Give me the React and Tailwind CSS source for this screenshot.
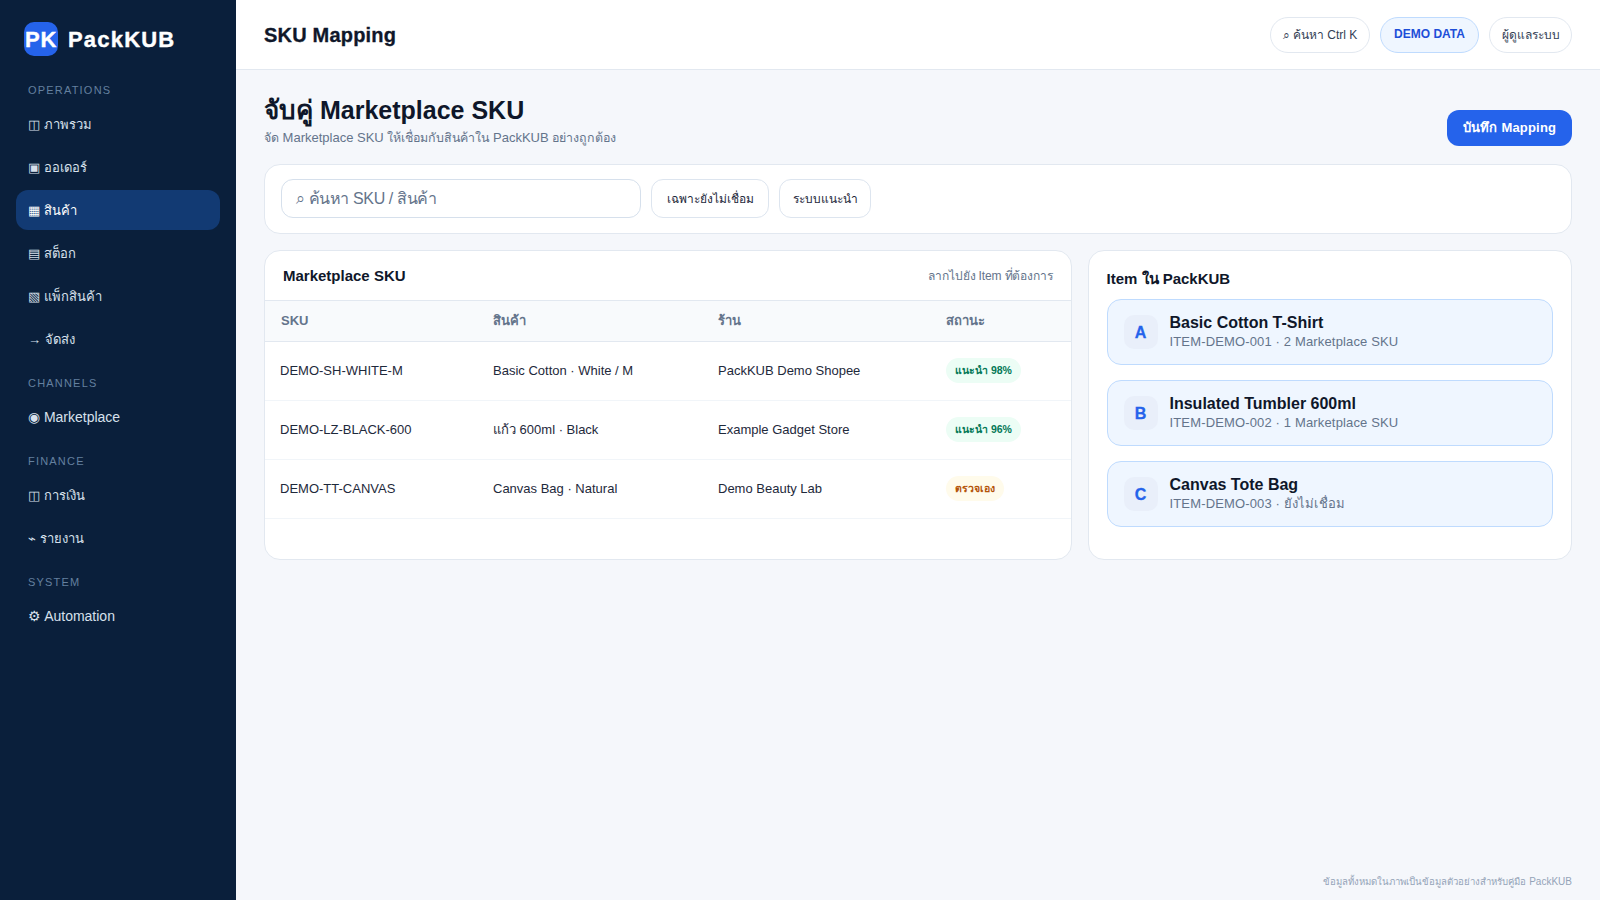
const navGroups = [
  {
    label: 'OPERATIONS',
    items: [
      { icon: '◫', name: 'ภาพรวม' },
      { icon: '▣', name: 'ออเดอร์' },
      { icon: '▦', name: 'สินค้า', active: true },
      { icon: '▤', name: 'สต็อก' },
      { icon: '▧', name: 'แพ็กสินค้า' },
      { icon: '→', name: 'จัดส่ง' },
    ],
  },
  { label: 'CHANNELS', items: [{ icon: '◉', name: 'Marketplace', latin: true }] },
  {
    label: 'FINANCE',
    items: [
      { icon: '◫', name: 'การเงิน' },
      { icon: '⌁', name: 'รายงาน' },
    ],
  },
  { label: 'SYSTEM', items: [{ icon: '⚙', name: 'Automation', latin: true }] },
];

const rows = [
  { sku: 'DEMO-SH-WHITE-M', product: 'Basic Cotton · White / M', shop: 'PackKUB Demo Shopee', status: 'แนะนำ 98%', ok: true },
  { sku: 'DEMO-LZ-BLACK-600', product: 'แก้ว 600ml · Black', shop: 'Example Gadget Store', status: 'แนะนำ 96%', ok: true },
  { sku: 'DEMO-TT-CANVAS', product: 'Canvas Bag · Natural', shop: 'Demo Beauty Lab', status: 'ตรวจเอง', ok: false },
];

const items = [
  { letter: 'A', name: 'Basic Cotton T-Shirt', sub: 'ITEM-DEMO-001 · 2 Marketplace SKU' },
  { letter: 'B', name: 'Insulated Tumbler 600ml', sub: 'ITEM-DEMO-002 · 1 Marketplace SKU' },
  { letter: 'C', name: 'Canvas Tote Bag', sub: 'ITEM-DEMO-003 · ยังไม่เชื่อม' },
];

function Sidebar() {
  return (
    <aside className="w-[236px] shrink-0 bg-[#0a1f3b] px-4 pt-[22px]">
      <div className="mb-[27px] flex items-center gap-[10px] px-2">
        <div className="flex h-[34px] w-[34px] shrink-0 items-center justify-center rounded-[10px] bg-[#2563eb] text-[22px] font-black tracking-[0.6px] text-white [-webkit-text-stroke-width:0.4px]">
          PK
        </div>
        <span className="text-[22px] font-black tracking-[1.2px] text-white [-webkit-text-stroke-width:0.4px]">PackKUB</span>
      </div>
      {navGroups.map((group) => (
        <div key={group.label} className="mb-[17px]">
          <div className="mb-[7px] h-[14px] px-3 text-[11px] leading-[14px] font-medium tracking-[1.2px] text-[#64809f]">
            {group.label}
          </div>
          {group.items.map((item) => (
            <div
              key={item.name}
              className={
                'mb-[3px] flex h-[40px] items-center rounded-xl px-3 ' +
                (item.latin ? 'text-[14px] ' : 'pt-[2px] text-[13px] ') +
                (item.active ? 'bg-[#123a73] font-medium text-white' : 'text-[#d7e0ec]')
              }
            >
              {item.icon} {item.name}
            </div>
          ))}
        </div>
      ))}
    </aside>
  );
}

function Header() {
  return (
    <header className="flex h-[70px] items-center justify-between border-b border-[#e2e8f0] bg-white px-7">
      <h1 className="text-[20px] font-black tracking-[0.2px] text-[#0f172a] [-webkit-text-stroke-width:0.3px]">SKU Mapping</h1>
      <div className="flex items-center gap-[10px]">
        <div className="flex h-[36px] w-[100px] items-center justify-center rounded-full border border-[#e2e8f0] bg-white text-[12px] text-[#334155]">
          ⌕ ค้นหา Ctrl K
        </div>
        <div className="flex h-[36px] w-[99px] items-center justify-center rounded-full border border-[#bfdbfe] bg-[#eff6ff] pb-[2px] text-[12px] font-semibold text-[#1d4ed8]">
          DEMO DATA
        </div>
        <div className="flex h-[36px] w-[83px] items-center justify-center rounded-full border border-[#e2e8f0] bg-white text-[12px] text-[#334155]">
          ผู้ดูแลระบบ
        </div>
      </div>
    </header>
  );
}

function SkuTable() {
  return (
    <section className="h-[310px] overflow-hidden rounded-2xl border border-[#e2e8f0] bg-white">
      <div className="flex h-[50px] items-center justify-between border-b border-[#e2e8f0] px-[18px] pt-px">
        <h2 className="text-[15px] font-bold text-[#0f172a]">Marketplace SKU</h2>
        <span className="text-[12px] tracking-[-0.15px] text-[#64748b]">ลากไปยัง Item ที่ต้องการ</span>
      </div>
      <table className="w-full table-fixed border-collapse text-left text-[13px] text-[#1e293b]">
        <thead>
          <tr className="h-[40px] border-b border-[#e2e8f0] bg-[#f8fafc] text-[#64748b]">
            <th className="w-[228px] pl-4 text-[13px] font-semibold">SKU</th>
            <th className="w-[225px] text-[13px] font-semibold">สินค้า</th>
            <th className="w-[228px] text-[13px] font-semibold">ร้าน</th>
            <th className="text-[13px] font-semibold">สถานะ</th>
          </tr>
        </thead>
        <tbody>
          {rows.map((row) => (
            <tr key={row.sku} className="h-[59px] border-b border-[#f1f5f9]">
              <td className="pl-[15px]">{row.sku}</td>
              <td>{row.product}</td>
              <td>{row.shop}</td>
              <td>
                <span
                  className={
                    'inline-flex h-[25px] items-center rounded-full px-[9px] text-[10.5px] font-bold ' +
                    (row.ok ? 'bg-[#ecfdf5] text-[#047857]' : 'bg-[#fffbeb] text-[#b45309]')
                  }
                >
                  {row.status}
                </span>
              </td>
            </tr>
          ))}
        </tbody>
      </table>
    </section>
  );
}

function ItemList() {
  return (
    <section className="h-[310px] rounded-2xl border border-[#e2e8f0] bg-white px-[18px] pt-[18px]">
      <h2 className="mb-[11px] text-[15px] leading-[19px] font-bold text-[#0f172a]">Item ใน PackKUB</h2>
      <div className="flex flex-col gap-[15px]">
        {items.map((item) => (
          <div
            key={item.letter}
            className="flex h-[66px] items-center gap-3 rounded-[14px] border border-[#bfdbfe] bg-[#eff6ff] px-4"
          >
            <div className="flex h-[34px] w-[34px] items-center justify-center rounded-[10px] bg-[#e9effa] pt-[2px] text-[16px] font-black text-[#2563eb] [-webkit-text-stroke-width:0.3px]">
              {item.letter}
            </div>
            <div>
              <div className="text-[16px] leading-[19px] font-bold text-[#0f172a]">{item.name}</div>
              <div className="text-[13px] leading-[19px] tracking-[0.15px] text-[#64748b]">{item.sub}</div>
            </div>
          </div>
        ))}
      </div>
    </section>
  );
}

export default function App() {
  return (
    <div className="flex min-h-[900px] bg-[#f5f7fb] font-['Liberation_Sans',sans-serif]">
      <Sidebar />
      <div className="flex min-w-0 flex-1 flex-col">
        <Header />
        <main className="flex-1 px-7 pt-[25px]">
          <div className="flex items-end justify-between">
            <div>
              <h2 className="text-[25px] leading-[30px] font-bold text-[#0f172a]">
                <span className="text-[26px]">จับคู่</span> Marketplace SKU
              </h2>
              <p className="mt-1 text-[13px] leading-[18px] text-[#64748b]">
                <span className="text-[12.4px]">จัด</span> Marketplace SKU{' '}
                <span className="text-[12.4px]">ให้เชื่อมกับสินค้าใน</span> PackKUB{' '}
                <span className="text-[12.4px]">อย่างถูกต้อง</span>
              </p>
            </div>
            <button className="mb-[1px] h-[36px] w-[125px] rounded-xl bg-[#2563eb] text-[13px] font-bold tracking-[0.2px] text-white">
              บันทึก Mapping
            </button>
          </div>
          <div className="mt-[17px] flex items-center gap-[10px] rounded-2xl border border-[#e2e8f0] bg-white px-4 pt-[14px] pb-[15px]">
            <div className="flex h-[39px] w-[360px] items-center rounded-xl border border-[#d6e0ec] bg-white px-[14px] text-[16px] tracking-[-0.4px] text-[#64748b]">
              ⌕ ค้นหา SKU / สินค้า
            </div>
            <button className="h-[39px] w-[118px] rounded-xl border border-[#dde5ef] bg-white text-[12px] font-medium text-[#1e293b]">
              เฉพาะยังไม่เชื่อม
            </button>
            <button className="h-[39px] w-[92px] rounded-xl border border-[#dde5ef] bg-white text-[12px] font-medium text-[#1e293b]">
              ระบบแนะนำ
            </button>
          </div>
          <div className="mt-4 grid grid-cols-[1fr_0.6fr] gap-4">
            <SkuTable />
            <ItemList />
          </div>
        </main>
        <footer className="px-7 pb-[11px] text-right text-[10px] leading-[14px] text-[#94a3b8]">
          <span className="text-[9.6px]">ข้อมูลทั้งหมดในภาพเป็นข้อมูลตัวอย่างสำหรับคู่มือ</span> PackKUB
        </footer>
      </div>
    </div>
  );
}
